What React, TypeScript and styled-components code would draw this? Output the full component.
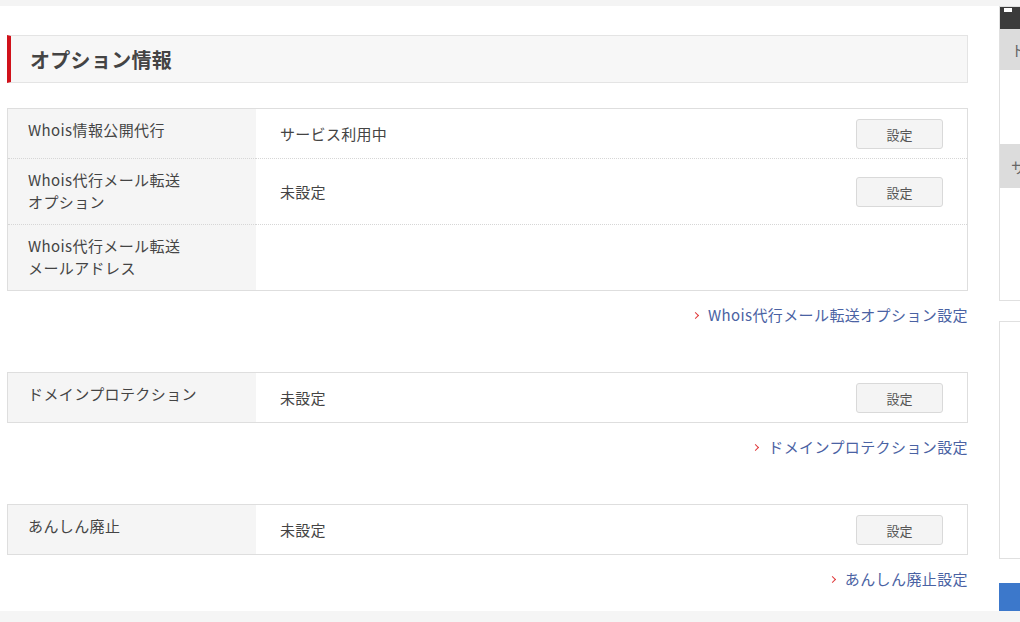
import styled, { createGlobalStyle } from 'styled-components';

interface OptionRow {
  label: string[];
  value?: string;
  button?: boolean;
}

interface OptionGroup {
  rows: OptionRow[];
  link: string;
}

const groups: OptionGroup[] = [
  {
    rows: [
      { label: ['Whois情報公開代行'], value: 'サービス利用中', button: true },
      { label: ['Whois代行メール転送', 'オプション'], value: '未設定', button: true },
      { label: ['Whois代行メール転送', 'メールアドレス'] },
    ],
    link: 'Whois代行メール転送オプション設定',
  },
  {
    rows: [{ label: ['ドメインプロテクション'], value: '未設定', button: true }],
    link: 'ドメインプロテクション設定',
  },
  {
    rows: [{ label: ['あんしん廃止'], value: '未設定', button: true }],
    link: 'あんしん廃止設定',
  },
];

const GlobalStyle = createGlobalStyle`
  html, body {
    margin: 0;
    padding: 0;
    background: #fff;
  }
  body {
    font-family: "Noto Sans CJK JP", "Noto Sans", sans-serif;
    color: #333;
  }
`;

const Page = styled.div`
  width: 1020px;
  height: 622px;
  overflow: hidden;
  display: flex;
  flex-direction: column;
  background: #fff;
`;

const TopStrip = styled.div`
  height: 6px;
  flex-shrink: 0;
  background: #f4f4f4;
`;

const BottomStrip = styled.div`
  flex: 1;
  background: #f5f5f5;
`;

const Body = styled.div`
  display: flex;
  align-items: flex-start;
  height: 605px;
  flex-shrink: 0;
`;

const Main = styled.main`
  width: 961px;
  flex-shrink: 0;
  margin-left: 7px;
  padding-top: 29px;
`;

const Heading = styled.h2`
  margin: 0 0 25px;
  height: 46px;
  display: flex;
  align-items: center;
  padding-left: 19px;
  background: #f7f7f7;
  border: 1px solid #e4e4e4;
  border-left: 4px solid #d0121b;
  font-size: 20px;
  font-weight: 700;
  color: #444;
  letter-spacing: 0.3px;
`;

const Table = styled.div`
  display: grid;
  grid-template-columns: 248px 1fr;
  border: 1px solid #dedede;
`;

const Label = styled.div<{ $first: boolean }>`
  background: #f5f5f5;
  padding: 10px 20px 11px;
  font-size: 15px;
  line-height: 22px;
  letter-spacing: 0.4px;
  color: #444;
  border-top: ${(p) => (p.$first ? 'none' : '1px dotted #d6d6d6')};
`;

const Value = styled.div<{ $first: boolean }>`
  display: flex;
  align-items: center;
  justify-content: space-between;
  padding: 10px 24px 9px 24px;
  font-size: 15px;
  line-height: 22px;
  letter-spacing: 0.3px;
  color: #444;
  border-top: ${(p) => (p.$first ? 'none' : '1px dotted #d6d6d6')};
`;

const SetButton = styled.button`
  width: 87px;
  height: 30px;
  background: #f4f4f4;
  border: 1px solid #d9d9d9;
  border-radius: 3px;
  font-family: inherit;
  font-size: 13px;
  color: #555;
  padding: 0;
  cursor: pointer;
`;

const LinkRow = styled.div<{ $last: boolean }>`
  display: flex;
  justify-content: flex-end;
  margin: 13px 0 ${(p) => (p.$last ? '0' : '46px')};
`;

const Link = styled.a`
  display: flex;
  align-items: center;
  gap: 10px;
  font-size: 15px;
  line-height: 22px;
  letter-spacing: 0.4px;
  color: #4a62a3;
  text-decoration: none;
  margin-right: 0;
`;

const Chevron = styled.span`
  width: 4px;
  height: 4px;
  border-top: 1.5px solid #e0393b;
  border-right: 1.5px solid #e0393b;
  transform: rotate(45deg);
  margin-top: 1px;
`;

const Sidebar = styled.aside`
  margin-left: 31px;
  width: 240px;
  flex-shrink: 0;
  display: flex;
  flex-direction: column;
`;

const SideBox = styled.div<{ $height: number }>`
  height: ${(p) => p.$height}px;
  border: 1px solid #e0e0e0;
  background: #fff;
  display: flex;
  flex-direction: column;
`;

const SideTop = styled.div`
  height: 22px;
  background: #3b3b3b;
  position: relative;
  &::after {
    content: '';
    position: absolute;
    left: 4px;
    top: 1px;
    width: 8px;
    height: 4px;
    background: #fff;
  }
`;

const SideHead = styled.div<{ $height: number }>`
  height: ${(p) => p.$height}px;
  background: #dcdcdc;
  display: flex;
  align-items: center;
  padding-left: 11px;
  font-size: 15px;
  color: #666;
`;

const SideBody = styled.div<{ $height?: number }>`
  height: ${(p) => (p.$height ? `${p.$height}px` : 'auto')};
  flex: ${(p) => (p.$height ? 'none' : '1')};
`;

const SideGap = styled.div`
  height: 20px;
`;

const BlueButton = styled.div`
  margin-top: 24px;
  height: 31px;
  background: #3c78cb;
`;

export default function App() {
  return (
    <>
      <GlobalStyle />
      <Page>
        <TopStrip />
        <Body>
          <Main>
            <Heading>オプション情報</Heading>
            {groups.map((group, gi) => (
              <section key={gi}>
                <Table>
                  {group.rows.map((row, ri) => [
                    <Label key={`l${ri}`} $first={ri === 0}>
                      {row.label.map((line, li) => (
                        <div key={li}>{line}</div>
                      ))}
                    </Label>,
                    <Value key={`v${ri}`} $first={ri === 0}>
                      <span>{row.value}</span>
                      {row.button && <SetButton>設定</SetButton>}
                    </Value>,
                  ])}
                </Table>
                <LinkRow $last={gi === groups.length - 1}>
                  <Link href="#">
                    <Chevron />
                    {group.link}
                  </Link>
                </LinkRow>
              </section>
            ))}
          </Main>
          <Sidebar>
            <SideBox $height={293}>
              <SideTop />
              <SideHead $height={41}>トップ</SideHead>
              <SideBody $height={74} />
              <SideHead $height={44}>サーバー</SideHead>
              <SideBody />
            </SideBox>
            <SideGap />
            <SideBox $height={236} />
            <BlueButton />
          </Sidebar>
        </Body>
        <BottomStrip />
      </Page>
    </>
  );
}
